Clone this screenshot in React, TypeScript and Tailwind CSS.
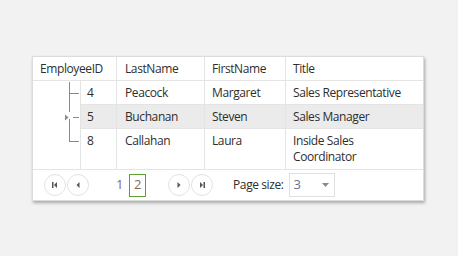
import React from "react";

type Employee = {
  id: number;
  lastName: string;
  firstName: string;
  title: string;
  selected?: boolean;
  tall?: boolean;
};

const rows: Employee[] = [
  { id: 4, lastName: "Peacock", firstName: "Margaret", title: "Sales Representative" },
  { id: 5, lastName: "Buchanan", firstName: "Steven", title: "Sales Manager", selected: true },
  { id: 8, lastName: "Callahan", firstName: "Laura", title: "Inside Sales Coordinator", tall: true },
];

function TreeLines() {
  return (
    <svg width="47" height="88" viewBox="0 0 47 88" className="block">
      <g stroke="#8a8a8a" strokeWidth="1" fill="none" shapeRendering="crispEdges">
        <line x1="36.5" y1="1" x2="36.5" y2="31" />
        <line x1="36.5" y1="38" x2="36.5" y2="61" />
        <line x1="36" y1="12.5" x2="46" y2="12.5" />
        <line x1="40" y1="36.5" x2="46" y2="36.5" />
        <line x1="36" y1="60.5" x2="46" y2="60.5" />
      </g>
      <polygon points="32,33.5 35.5,36.5 32,39.5" fill="#8a8a8a" />
    </svg>
  );
}

function RoundButton({ kind }: { kind: "first" | "prev" | "next" | "last" }) {
  return (
    <button className="flex h-[22px] w-[22px] items-center justify-center rounded-full border border-[#e2e2e2] bg-white">
      <svg width="8" height="8" viewBox="0 0 8 8">
        {kind === "first" && (
          <g fill="#555">
            <rect x="1" y="1" width="1.5" height="6" />
            <polygon points="6,1 6,7 3,4" />
          </g>
        )}
        {kind === "prev" && <polygon points="5.5,1 5.5,7 2.5,4" fill="#555" />}
        {kind === "next" && <polygon points="2.5,1 2.5,7 5.5,4" fill="#555" />}
        {kind === "last" && (
          <g fill="#555">
            <polygon points="2,1 2,7 5,4" />
            <rect x="5.5" y="1" width="1.5" height="6" />
          </g>
        )}
      </svg>
    </button>
  );
}

export default function App() {
  return (
    <div
      className="h-[256px] w-[458px] bg-[#f2f2f2] pl-[32px] pt-[56px] text-[12px] tracking-[-0.4px] text-[#2e2e2e]"
      style={{ fontFamily: '"Open Sans", "Noto Sans", sans-serif' }}
    >
      <div className="w-[392px] border border-[#dcdcdc] bg-white shadow-[1px_2px_3px_rgba(0,0,0,0.3)]">
        {/* Header */}
        <div className="grid h-[24px] grid-cols-[83px_88px_81px_138px] border-b border-[#e4e4e4] leading-[23px]">
          <div className="pl-[7px]">EmployeeID</div>
          <div className="border-l border-[#e4e4e4] pl-[8px]">LastName</div>
          <div className="border-l border-[#e4e4e4] pl-[7px]">FirstName</div>
          <div className="border-l border-[#e4e4e4] pl-[7px]">Title</div>
        </div>

        {/* Body */}
        <div className="flex border-b border-[#e4e4e4]">
          <div className="w-[47px]">
            <TreeLines />
          </div>
          <div className="flex-1 border-l border-[#e4e4e4]">
            {rows.map((r, i) => (
              <div
                key={r.id}
                className={`grid grid-cols-[35px_88px_81px_138px] ${
                  r.tall ? "h-[40px]" : "h-[24px]"
                } ${i < rows.length - 1 ? "border-b border-[#e4e4e4]" : ""} ${
                  r.selected ? "bg-[#ebebeb]" : ""
                }`}
              >
                <div className="pl-[6px] pt-[4px] leading-[16px]">{r.id}</div>
                <div className="border-l border-[#e4e4e4] pl-[8px] pt-[4px] leading-[16px]">{r.lastName}</div>
                <div className="border-l border-[#e4e4e4] pl-[7px] pt-[4px] leading-[16px]">{r.firstName}</div>
                <div className="border-l border-[#e4e4e4] pl-[7px] pr-[6px] pt-[4px] leading-[16px]">{r.title}</div>
              </div>
            ))}
          </div>
        </div>

        {/* Pager */}
        <div className="flex h-[30px] items-center pl-[11px]">
          <div className="flex gap-[1px]">
            <RoundButton kind="first" />
            <RoundButton kind="prev" />
          </div>
          <div className="ml-[27px] flex items-center text-[13px]">
            <span className="text-[#7b6a86]">1</span>
            <span className="ml-[6px] flex h-[23px] w-[17px] items-center justify-center border border-[#5da130] text-[#7a6e60]">
              2
            </span>
          </div>
          <div className="ml-[22px] flex gap-[1px]">
            <RoundButton kind="next" />
            <RoundButton kind="last" />
          </div>
          <span className="ml-[20px]">Page size:</span>
          <div className="ml-[5px] flex h-[24px] w-[46px] items-center justify-between border border-[#e0e0e0] pl-[4px] pr-[5px]">
            <span className="text-[13px] text-[#6c6f8a]">3</span>
            <svg width="7" height="4" viewBox="0 0 7 4">
              <polygon points="0,0 7,0 3.5,4" fill="#8a8a8a" />
            </svg>
          </div>
        </div>
      </div>
    </div>
  );
}
